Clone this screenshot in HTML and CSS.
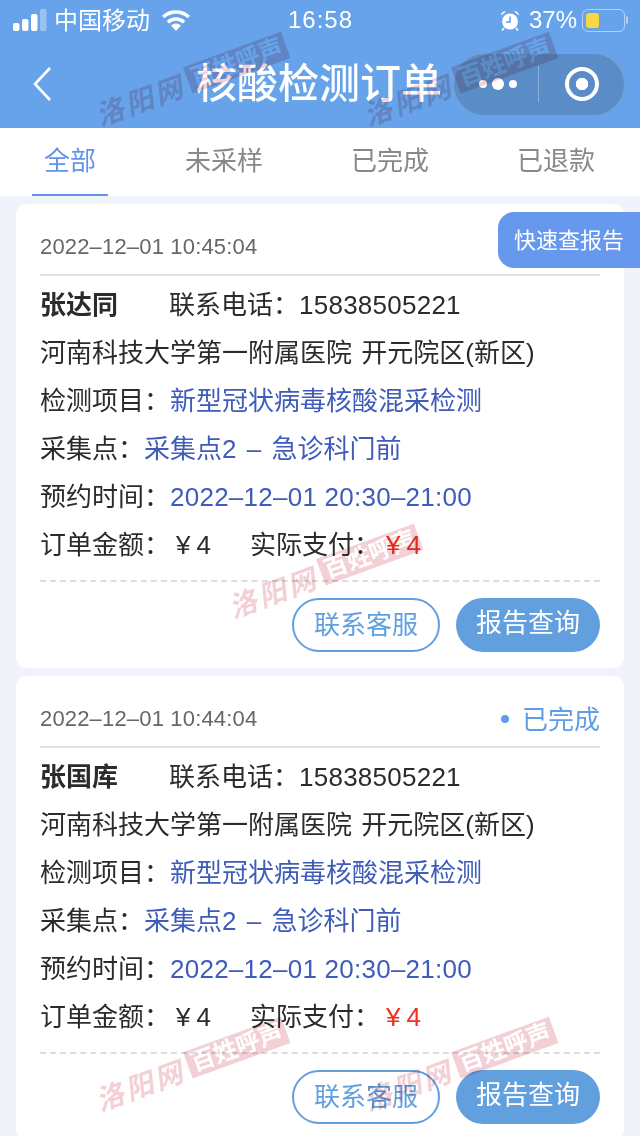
FILE: index.html
```html
<!DOCTYPE html>
<html lang="zh-CN">
<head>
    <meta charset="UTF-8">
    <meta name="viewport" content="width=device-width, initial-scale=1.0">
    <title>核酸检测订单</title>
    <link rel="stylesheet" href="styles.css">
</head>
<body>
<div class="page">
    <header class="app-header">
        <div class="status-bar">
            <div class="status-left">
                <svg class="signal" width="34" height="22" viewBox="0 0 34 22">
                    <rect x="0" y="14" width="6.5" height="8" rx="2" fill="#fff"/>
                    <rect x="9" y="10" width="6.5" height="12" rx="2" fill="#fff"/>
                    <rect x="18" y="5" width="6.5" height="17" rx="2" fill="#fff"/>
                    <rect x="27" y="0" width="6.5" height="22" rx="2" fill="#fff" opacity="0.35"/>
                </svg>
                <span class="carrier">中国移动</span>
                <svg class="wifi" width="30" height="21" viewBox="0 0 30 21">
                    <path d="M15 21l-5-5.6a7.4 7.4 0 0 1 10 0z" fill="#fff"/>
                    <path d="M6.9 12.2a12 12 0 0 1 16.2 0" fill="none" stroke="#fff" stroke-width="3.4"/>
                    <path d="M2.2 7a19 19 0 0 1 25.6 0" fill="none" stroke="#fff" stroke-width="3.4"/>
                </svg>
            </div>
            <div class="status-time">16:58</div>
            <div class="status-right">
                <svg class="alarm" width="20" height="21" viewBox="0 0 20 21">
                    <circle cx="10" cy="11.5" r="8" fill="#fff"/>
                    <path d="M10 6.5v5.5h-4" fill="none" stroke="#66a3ea" stroke-width="1.6"/>
                    <path d="M1 5.5a4 4 0 0 1 5-4zM19 5.5a4 4 0 0 0-5-4z" fill="#fff"/>
                    <path d="M4 18l-2 2.5M16 18l2 2.5" stroke="#fff" stroke-width="1.6"/>
                </svg>
                <span>37%</span>
                <div class="battery"><div class="battery-fill"></div></div>
                <div class="battery-nub"></div>
            </div>
        </div>
        <div class="nav-bar">
            <svg class="back" width="20" height="36" viewBox="0 0 20 36">
                <path d="M18 2L3 18l15 16" fill="none" stroke="#fff" stroke-width="2.6"/>
            </svg>
            <h1 class="nav-title">核酸检测订单</h1>
            <div class="capsule">
                <div class="capsule-dots"><i></i><i class="big"></i><i></i></div>
                <div class="capsule-line"></div>
                <div class="capsule-target"><i></i></div>
            </div>
        </div>
    </header>

    <nav class="tabs">
        <a class="tab active">全部</a>
        <a class="tab">未采样</a>
        <a class="tab">已完成</a>
        <a class="tab">已退款</a>
    </nav>

    <main class="orders">
        <section class="card">
            <div class="card-head">
                <span class="date">2022–12–01 10:45:04</span>
            </div>
            <div class="row"><b class="name">张达同</b>联系电话：<span class="num">15838505221</span></div>
            <div class="row hospital">河南科技大学第一附属医院 开元院区(新区)</div>
            <div class="row">检测项目：<span class="link">新型冠状病毒核酸混采检测</span></div>
            <div class="row">采集点：<span class="link point">采集点2 – 急诊科门前</span></div>
            <div class="row">预约时间：<span class="link num">2022–12–01 20:30–21:00</span></div>
            <div class="row">订单金额：<span class="price">¥4</span><span class="paid">实际支付：</span><span class="price red">¥4</span></div>
            <div class="card-foot">
                <a class="btn btn-line">联系客服</a>
                <a class="btn btn-fill">报告查询</a>
            </div>
        </section>

        <section class="card">
            <div class="card-head">
                <span class="date">2022–12–01 10:44:04</span>
                <span class="state"><i></i>已完成</span>
            </div>
            <div class="row"><b class="name">张国库</b>联系电话：<span class="num">15838505221</span></div>
            <div class="row hospital">河南科技大学第一附属医院 开元院区(新区)</div>
            <div class="row">检测项目：<span class="link">新型冠状病毒核酸混采检测</span></div>
            <div class="row">采集点：<span class="link point">采集点2 – 急诊科门前</span></div>
            <div class="row">预约时间：<span class="link num">2022–12–01 20:30–21:00</span></div>
            <div class="row">订单金额：<span class="price">¥4</span><span class="paid">实际支付：</span><span class="price red">¥4</span></div>
            <div class="card-foot">
                <a class="btn btn-line">联系客服</a>
                <a class="btn btn-fill">报告查询</a>
            </div>
        </section>
    </main>

    <a class="quick-report">快速查报告</a>

    <div class="wm wm-top-left"><span class="wm-script">洛阳网</span><span class="wm-box">百姓呼声</span></div>
    <div class="wm wm-top-right"><span class="wm-script">洛阳网</span><span class="wm-box">百姓呼声</span></div>
    <div class="wm wm-middle"><span class="wm-script">洛阳网</span><span class="wm-box">百姓呼声</span></div>
    <div class="wm wm-bottom-left"><span class="wm-script">洛阳网</span><span class="wm-box">百姓呼声</span></div>
    <div class="wm wm-bottom-right"><span class="wm-script">洛阳网</span><span class="wm-box">百姓呼声</span></div>
</div>
</body>
</html>
```

FILE: styles.css
```css
* {
    box-sizing: border-box;
}

html, body {
    margin: 0;
    padding: 0;
}

body {
    font-family: "Liberation Sans", "Noto Sans CJK SC", sans-serif;
    color: #2b2b2b;
}

.page {
    position: relative;
    width: 640px;
    height: 1136px;
    overflow: hidden;
    background-color: #f0f4fa;
}

/* header */
.app-header {
    height: 128px;
    background-color: #66a3ea;
    color: #fff;
}

.status-bar {
    display: flex;
    align-items: center;
    height: 40px;
    padding: 0 12px 0 13px;
    font-size: 24px;
}

.status-left,
.status-right {
    display: flex;
    flex: 1;
    align-items: center;
}

.status-right {
    justify-content: flex-end;
}

.status-time {
    letter-spacing: 1px;
}

.signal {
    margin-right: 7px;
}

.carrier {
    margin-bottom: 4px;
}

.wifi {
    margin-left: 11px;
}

.alarm {
    margin-right: 9px;
}

.battery {
    width: 43px;
    height: 23px;
    margin-left: 5px;
    padding: 3px;
    border: 1.5px solid rgba(255, 255, 255, 0.5);
    border-radius: 6px;
}

.battery-fill {
    width: 13px;
    height: 100%;
    border-radius: 3px;
    background-color: #f8d648;
}

.battery-nub {
    width: 2px;
    height: 8px;
    margin-left: 1px;
    border-radius: 0 2px 2px 0;
    background-color: rgba(255, 255, 255, 0.5);
}

.nav-bar {
    position: relative;
    display: flex;
    align-items: center;
    justify-content: space-between;
    height: 88px;
    padding: 0 15px 0 32px;
}

.nav-title {
    position: absolute;
    left: -2px;
    right: 0;
    margin: 0;
    font-size: 41px;
    font-weight: 500;
    line-height: 89px;
    text-align: center;
}

.capsule {
    display: flex;
    align-items: center;
    width: 172px;
    height: 63px;
    border: 1px solid rgba(255, 255, 255, 0.18);
    border-radius: 32px;
    background-color: #5a8dc7;
}

.capsule-dots {
    display: flex;
    flex: 1;
    align-items: center;
    justify-content: center;
    gap: 5px;
    padding-left: 4px;
}

.capsule-dots i {
    width: 8px;
    height: 8px;
    border-radius: 50%;
    background-color: #fff;
}

.capsule-dots i.big {
    width: 12px;
    height: 12px;
}

.capsule-line {
    width: 1px;
    height: 36px;
    background-color: rgba(255, 255, 255, 0.3);
}

.capsule-target {
    display: flex;
    align-items: center;
    justify-content: center;
    width: 85px;
    height: 100%;
}

.capsule-target i {
    display: flex;
    width: 34px;
    height: 34px;
    border: 4px solid #fff;
    border-radius: 50%;
    background: radial-gradient(circle, #fff 0 6px, transparent 6.5px);
}

/* tabs */
.tabs {
    display: flex;
    gap: 88px;
    height: 68px;
    padding-left: 32px;
    background-color: #fff;
    font-size: 26px;
    color: #888;
}

.tab {
    line-height: 66px;
    white-space: nowrap;
}

.tab.active {
    width: 76px;
    height: 68px;
    margin-right: -11px;
    border-bottom: 2px solid #6295ea;
    color: #6295ea;
    text-align: center;
}

/* order cards */
.orders {
    display: flex;
    flex-direction: column;
    gap: 8px;
    padding: 8px 16px 0;
}

.card {
    flex-shrink: 0;
    padding: 0 24px 16px;
    border-radius: 10px;
    background-color: #fff;
}

.card-head {
    display: flex;
    align-items: center;
    justify-content: space-between;
    height: 72px;
    padding-top: 24px;
    padding-bottom: 8px;
    border-bottom: 2px solid #e0e0e0;
    margin-bottom: 5px;
}

.date {
    font-size: 22px;
    letter-spacing: 0.17px;
    color: #666;
}

.state {
    display: flex;
    align-items: center;
    margin-bottom: 4px;
    font-size: 26px;
    color: #5f9de8;
}

.state i {
    width: 8px;
    height: 8px;
    margin-top: 4px;
    margin-right: 13px;
    border-radius: 50%;
    background-color: #5f9de8;
}

.row {
    height: 48px;
    font-size: 26px;
    line-height: 48px;
    white-space: nowrap;
}

.hospital {
    word-spacing: 2px;
}

.name {
    display: inline-block;
    width: 129px;
    font-weight: 700;
}

.num {
    letter-spacing: 0.25px;
}

.link {
    color: #3f5cba;
}

.point {
    word-spacing: 3px;
}

.price {
    display: inline-block;
    margin-left: 6px;
    letter-spacing: 6px;
}

.price.red {
    color: #f03020;
}

.paid {
    margin-left: 33px;
}

.card-foot {
    display: flex;
    justify-content: flex-end;
    gap: 16px;
    margin-top: 11px;
    padding-top: 16px;
    border-top: 2px dashed #ddd;
}

.btn {
    height: 54px;
    border-radius: 27px;
    font-size: 26px;
    line-height: 50px;
    text-align: center;
}

.btn-line {
    width: 148px;
    border: 2px solid #629fdf;
    color: #629fdf;
}

.btn-fill {
    width: 144px;
    background-color: #629fdf;
    color: #fff;
}

.quick-report {
    position: absolute;
    top: 212px;
    right: 0;
    width: 142px;
    height: 56px;
    padding-left: 16px;
    border-radius: 16px 0 0 16px;
    background-color: #6699ee;
    color: #fff;
    font-size: 22px;
    line-height: 57px;
}

/* watermarks */
.wm {
    position: absolute;
    display: flex;
    align-items: center;
    width: 204px;
    height: 40px;
    transform: rotate(-20deg);
    white-space: nowrap;
    pointer-events: none;
    mix-blend-mode: multiply;
}

.wm-script {
    width: 98px;
    font-size: 28px;
    font-weight: 700;
    font-style: italic;
    letter-spacing: 3px;
    color: #f3d0d5;
}

.wm-box {
    width: 104px;
    height: 28px;
    margin-bottom: 2px;
    background-color: #f3d0d5;
    color: #fff;
    font-size: 24px;
    font-weight: 700;
    line-height: 28px;
    text-align: center;
}

.wm-top-left {
    left: 90px;
    top: 60px;
}

.wm-top-right {
    left: 358px;
    top: 60px;
}

.wm-middle {
    left: 223px;
    top: 552px;
}

.wm-bottom-left {
    left: 90px;
    top: 1045px;
}

.wm-bottom-right {
    left: 358px;
    top: 1045px;
}
```
